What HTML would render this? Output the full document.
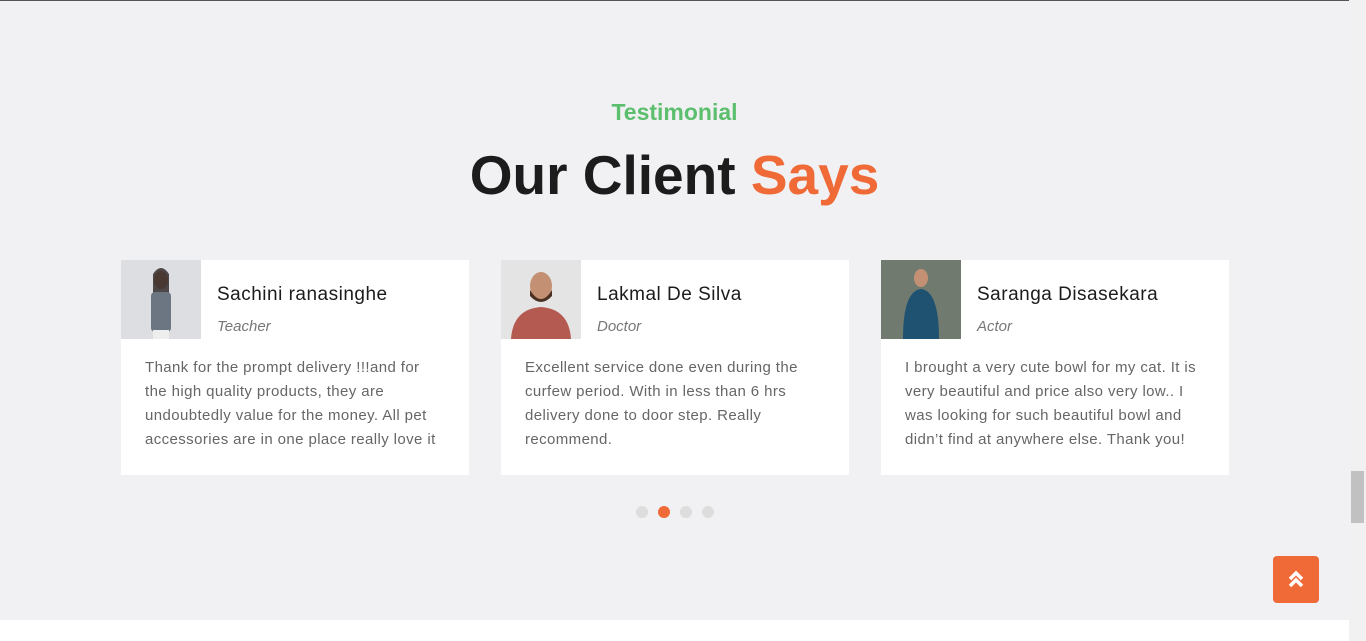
<!DOCTYPE html>
<html><head><meta charset="utf-8"><style>
*{margin:0;padding:0;box-sizing:border-box}
body{width:1366px;height:641px;overflow:hidden;background:#f1f1f3;font-family:"Liberation Sans",sans-serif;position:relative}
.topline{position:absolute;top:0;left:0;width:1349px;height:1px;background:#555}
.bottom{position:absolute;top:620px;left:0;width:1349px;height:21px;background:#fff}
.sb{position:absolute;top:0;right:0;width:17px;height:641px;background:#f1f1f1}
.thumb{position:absolute;top:471px;left:2px;width:13px;height:52px;background:#c1c1c1}
.sub{position:absolute;top:99px;left:0;width:1349px;text-align:center;color:#5cbf6e;font-size:23px;font-weight:bold}
h1{position:absolute;top:143px;left:0;width:1349px;text-align:center;font-size:55px;color:#1c1c1c;font-weight:bold}
h1 span{color:#ef6a37}
.card{position:absolute;top:260px;width:348px;height:215px;background:#fff}
.ph{position:absolute;left:0;top:0;width:80px;height:79px;background:#d7d9dc}
.name{position:absolute;left:96px;top:24px;font-size:19px;color:#1c1c1c;letter-spacing:.5px}
.role{position:absolute;left:96px;top:58px;font-size:15px;font-style:italic;color:#777}
.txt{position:absolute;left:24px;top:96px;width:296px;font-size:15px;line-height:24px;color:#666;letter-spacing:.4px}
.dots{position:absolute;top:505px;left:636px}
.dots i{display:inline-block;width:12px;height:12px;border-radius:50%;background:#ddd;margin-right:10px}
.btn{position:absolute;left:1273px;top:556px;width:46px;height:47px;background:#ef6a37;border-radius:4px}
</style></head><body>
<div class="topline"></div>
<div class="sub">Testimonial</div>
<h1>Our Client <span>Says</span></h1>
<div class="card" style="left:121px"><div class="ph" style="background:#dcdee1"><svg width="80" height="79"><ellipse cx="40" cy="20" rx="7" ry="9" fill="#c9977a"/><path d="M32 14 q8-12 16 0 v40 h-16z" fill="#2a2020" opacity=".8"/><rect x="30" y="32" width="20" height="40" rx="4" fill="#6c7682"/><rect x="32" y="70" width="16" height="9" fill="#eee"/></svg></div><div class="name">Sachini ranasinghe</div><div class="role">Teacher</div><div class="txt">Thank for the prompt delivery !!!and for the high quality products, they are undoubtedly value for the money. All pet accessories are in one place really love it</div></div>
<div class="card" style="left:501px"><div class="ph" style="background:#e4e4e4"><svg width="80" height="79"><ellipse cx="40" cy="26" rx="11" ry="14" fill="#c49074"/><path d="M29 30 q11 18 22 0 v6 q-11 12 -22 0z" fill="#4a3020"/><path d="M10 79 q2-30 30-32 q28 2 30 32z" fill="#b45a50"/></svg></div><div class="name">Lakmal De Silva</div><div class="role">Doctor</div><div class="txt">Excellent service done even during the curfew period. With in less than 6 hrs delivery done to door step. Really recommend.</div></div>
<div class="card" style="left:881px"><div class="ph" style="background:#707a6f"><svg width="80" height="79"><ellipse cx="40" cy="18" rx="7" ry="9" fill="#c49074"/><path d="M22 79 q0-48 18-50 q18 2 18 50z" fill="#1f5270"/></svg></div><div class="name">Saranga Disasekara</div><div class="role">Actor</div><div class="txt">I brought a very cute bowl for my cat. It is very beautiful and price also very low.. I was looking for such beautiful bowl and didn’t find at anywhere else. Thank you!</div></div>
<div class="dots"><i></i><i style="background:#ef6a37"></i><i></i><i></i></div>
<div class="btn"><svg width="46" height="47"><path d="M17 23 l6-6 l6 6 M17 30 l6-6 l6 6" stroke="#fff" stroke-width="3.5" fill="none"/></svg></div>
<div class="bottom"></div>
<div class="sb"><div class="thumb"></div></div>
</body></html>
